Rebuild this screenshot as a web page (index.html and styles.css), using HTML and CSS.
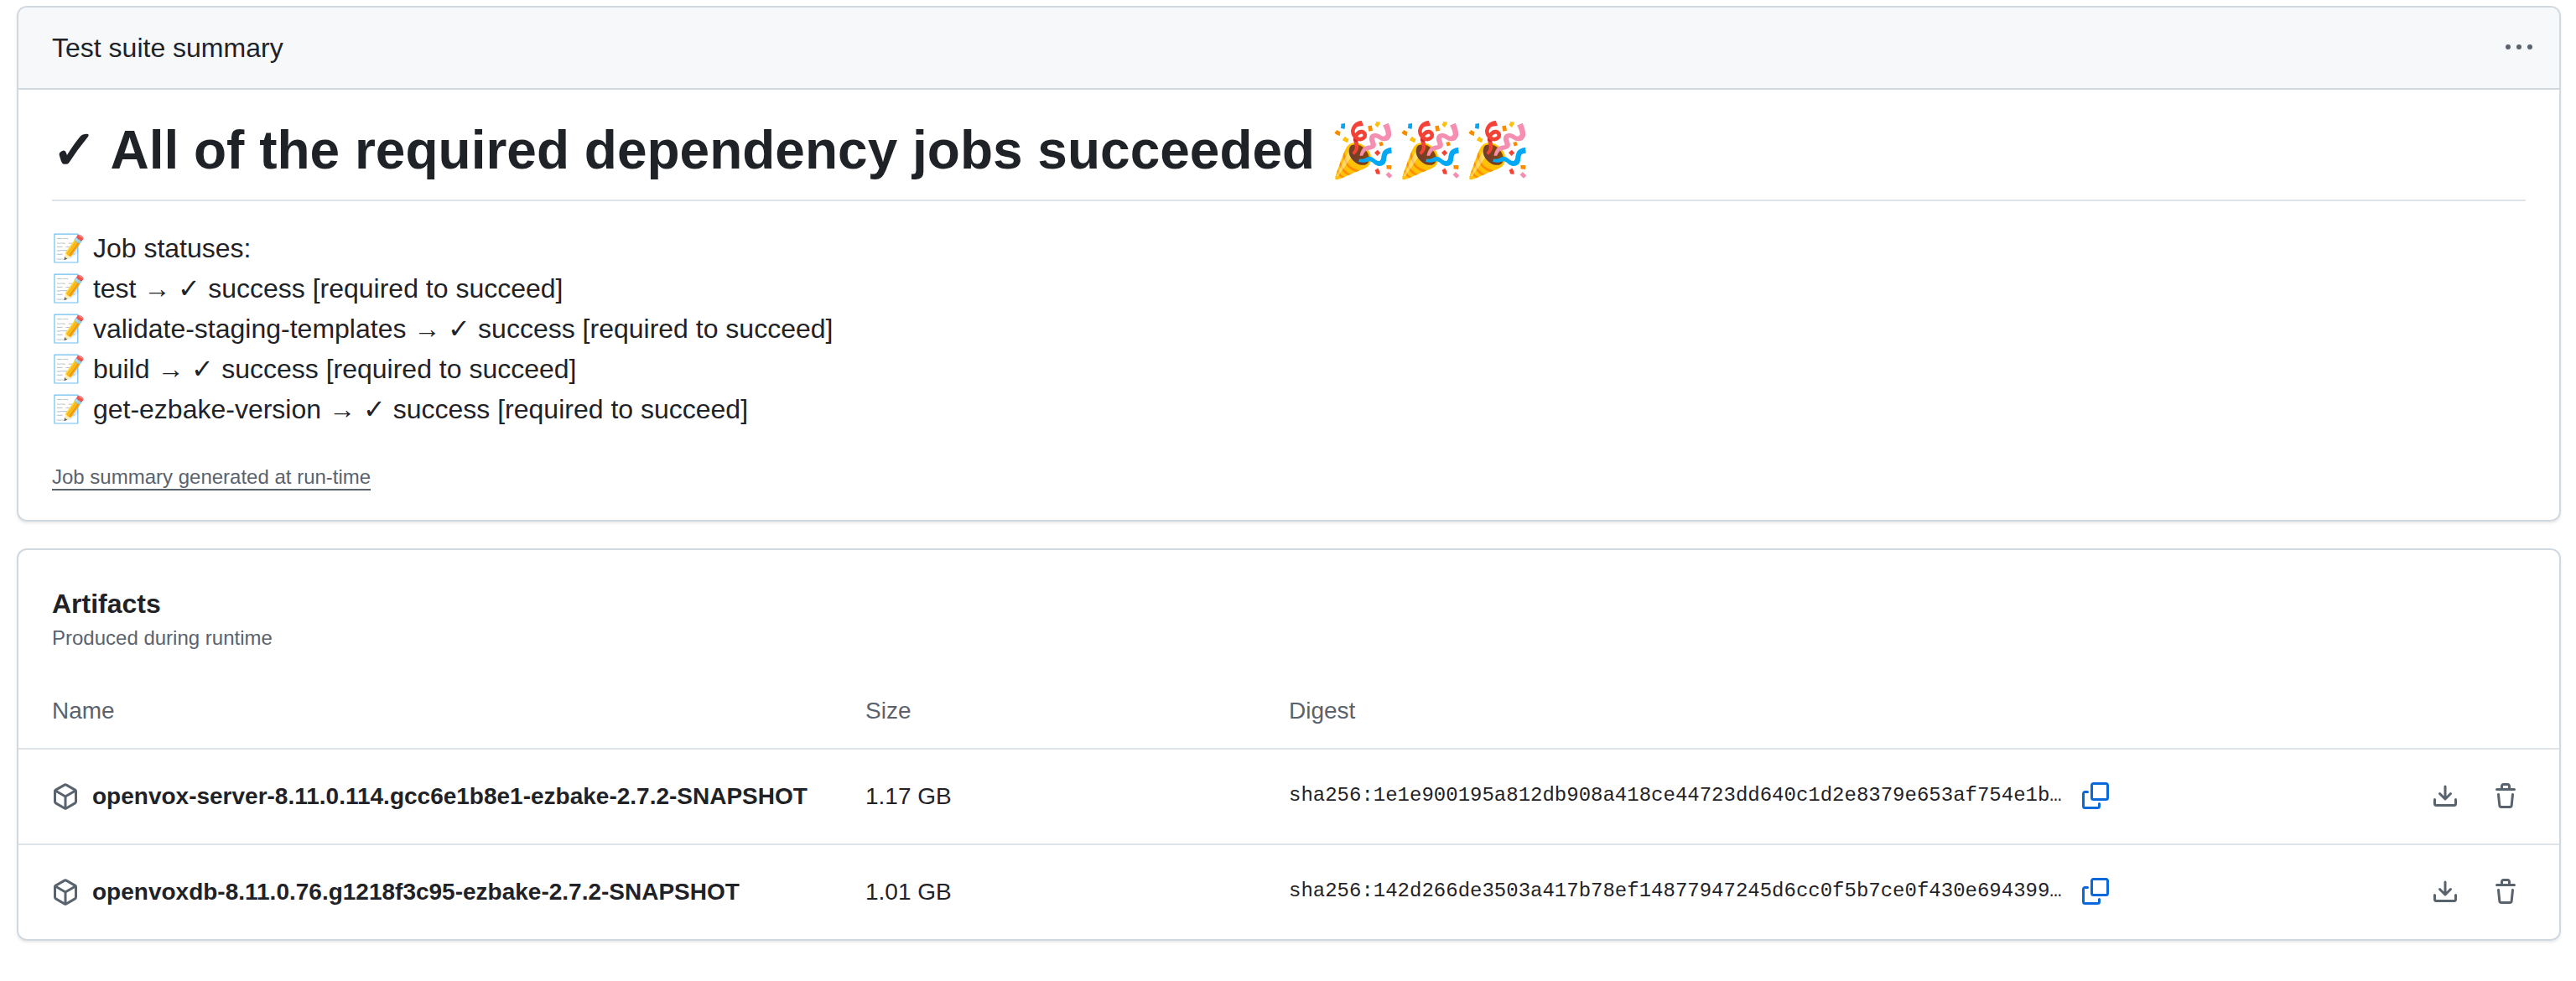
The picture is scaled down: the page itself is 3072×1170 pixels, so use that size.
FILE: index.html
```
<!DOCTYPE html>
<html lang="en">
<head>
    <meta charset="UTF-8">
    <meta name="viewport" content="width=device-width, initial-scale=1.0">
    <title>Test suite summary</title>
    <link rel="stylesheet" href="styles.css">
</head>
<body>
    <!-- Icons -->
    <svg class="sprite" aria-hidden="true">
        <symbol id="package" viewBox="0 0 16 16">
            <path d="m8.878.392 5.25 3.045c.54.314.872.89.872 1.514v6.098a1.75 1.75 0 0 1-.872 1.514l-5.25 3.045a1.75 1.75 0 0 1-1.756 0l-5.25-3.045A1.75 1.75 0 0 1 1 11.049V4.951c0-.624.332-1.201.872-1.514L7.122.392a1.75 1.75 0 0 1 1.756 0ZM7.875 1.69l-4.63 2.685L8 7.133l4.755-2.758-4.63-2.685a.248.248 0 0 0-.25 0ZM2.5 5.677v5.372c0 .09.047.171.125.216l4.625 2.683V8.432Zm6.25 8.271 4.625-2.683a.25.25 0 0 0 .125-.216V5.677L8.75 8.432Z"/>
        </symbol>
        <symbol id="copy" viewBox="0 0 16 16">
            <path d="M0 6.75C0 5.784.784 5 1.75 5h1.5a.75.75 0 0 1 0 1.5h-1.5a.25.25 0 0 0-.25.25v7.5c0 .138.112.25.25.25h7.5a.25.25 0 0 0 .25-.25v-1.5a.75.75 0 0 1 1.5 0v1.5A1.75 1.75 0 0 1 9.25 16h-7.5A1.75 1.75 0 0 1 0 14.25Z"/>
            <path d="M5 1.75C5 .784 5.784 0 6.75 0h7.5C15.216 0 16 .784 16 1.75v7.5A1.75 1.75 0 0 1 14.25 11h-7.5A1.75 1.75 0 0 1 5 9.25Zm1.75-.25a.25.25 0 0 0-.25.25v7.5c0 .138.112.25.25.25h7.5a.25.25 0 0 0 .25-.25v-7.5a.25.25 0 0 0-.25-.25Z"/>
        </symbol>
        <symbol id="download" viewBox="0 0 16 16">
            <path d="M2.75 14A1.75 1.75 0 0 1 1 12.25v-2.5a.75.75 0 0 1 1.5 0v2.5c0 .138.112.25.25.25h10.5a.25.25 0 0 0 .25-.25v-2.5a.75.75 0 0 1 1.5 0v2.5A1.75 1.75 0 0 1 13.25 14Z"/>
            <path d="M7.25 7.689V2a.75.75 0 0 1 1.5 0v5.689l1.97-1.969a.749.749 0 1 1 1.06 1.06l-3.25 3.25a.749.749 0 0 1-1.06 0L4.22 6.78a.749.749 0 1 1 1.06-1.06l1.97 1.969Z"/>
        </symbol>
        <symbol id="trash" viewBox="0 0 16 16">
            <path d="M11 1.75V3h2.25a.75.75 0 0 1 0 1.5H2.75a.75.75 0 0 1 0-1.5H5V1.75C5 .784 5.784 0 6.75 0h2.5C10.216 0 11 .784 11 1.75ZM4.496 6.675l.66 6.6a.25.25 0 0 0 .249.225h5.19a.25.25 0 0 0 .249-.225l.66-6.6a.75.75 0 0 1 1.492.149l-.66 6.6A1.748 1.748 0 0 1 10.595 15h-5.19a1.75 1.75 0 0 1-1.741-1.575l-.66-6.6a.75.75 0 1 1 1.492-.15ZM6.5 1.75V3h3V1.75a.25.25 0 0 0-.25-.25h-2.5a.25.25 0 0 0-.25.25Z"/>
        </symbol>
        <symbol id="kebab" viewBox="0 0 16 16">
            <path d="M8 9a1.5 1.5 0 1 0 0-3 1.5 1.5 0 0 0 0 3ZM1.5 9a1.5 1.5 0 1 0 0-3 1.5 1.5 0 0 0 0 3Zm13 0a1.5 1.5 0 1 0 0-3 1.5 1.5 0 0 0 0 3Z"/>
        </symbol>
    </svg>

    <!-- Job summary -->
    <section class="card">
        <header class="card-header">
            <span>Test suite summary</span>
            <button class="icon-btn" aria-label="More options"><svg class="icon"><use href="#kebab"/></svg></button>
        </header>
        <div class="summary">
            <h1>✓ All of the required dependency jobs succeeded 🎉🎉🎉</h1>
            <p>
                📝 Job statuses:<br>
                📝 test → ✓ success [required to succeed]<br>
                📝 validate-staging-templates → ✓ success [required to succeed]<br>
                📝 build → ✓ success [required to succeed]<br>
                📝 get-ezbake-version → ✓ success [required to succeed]
            </p>
            <a class="summary-note" href="#">Job summary generated at run-time</a>
        </div>
    </section>

    <!-- Artifacts -->
    <section class="card">
        <div class="artifacts-header">
            <h2>Artifacts</h2>
            <div class="subtitle">Produced during runtime</div>
        </div>
        <table class="artifacts">
            <thead>
                <tr>
                    <th class="col-name">Name</th>
                    <th class="col-size">Size</th>
                    <th class="col-digest">Digest</th>
                    <th></th>
                </tr>
            </thead>
            <tbody>
                <tr>
                    <td>
                        <div class="name"><svg class="icon"><use href="#package"/></svg><span>openvox-server-8.11.0.114.gcc6e1b8e1-ezbake-2.7.2-SNAPSHOT</span></div>
                    </td>
                    <td>1.17 GB</td>
                    <td>
                        <div class="digest">
                            <code>sha256:1e1e900195a812db908a418ce44723dd640c1d2e8379e653af754e1b…</code>
                            <button class="icon-btn copy" aria-label="Copy digest"><svg class="icon"><use href="#copy"/></svg></button>
                        </div>
                    </td>
                    <td>
                        <div class="actions">
                            <button class="icon-btn" aria-label="Download"><svg class="icon"><use href="#download"/></svg></button>
                            <button class="icon-btn" aria-label="Delete"><svg class="icon"><use href="#trash"/></svg></button>
                        </div>
                    </td>
                </tr>
                <tr>
                    <td>
                        <div class="name"><svg class="icon"><use href="#package"/></svg><span>openvoxdb-8.11.0.76.g1218f3c95-ezbake-2.7.2-SNAPSHOT</span></div>
                    </td>
                    <td>1.01 GB</td>
                    <td>
                        <div class="digest">
                            <code>sha256:142d266de3503a417b78ef14877947245d6cc0f5b7ce0f430e694399…</code>
                            <button class="icon-btn copy" aria-label="Copy digest"><svg class="icon"><use href="#copy"/></svg></button>
                        </div>
                    </td>
                    <td>
                        <div class="actions">
                            <button class="icon-btn" aria-label="Download"><svg class="icon"><use href="#download"/></svg></button>
                            <button class="icon-btn" aria-label="Delete"><svg class="icon"><use href="#trash"/></svg></button>
                        </div>
                    </td>
                </tr>
            </tbody>
        </table>
    </section>
</body>
</html>
```
FILE: styles.css
```
* {
    box-sizing: border-box;
}
body {
    margin: 0;
    padding: 7px 18px 0 20px;
    font-family: "Liberation Sans", Arial, sans-serif;
    font-size: 28px;
    line-height: 1.5;
    color: #1f2328;
    background-color: #fff;
}
.sprite {
    display: none;
}
.icon {
    display: block;
    width: 32px;
    height: 32px;
    flex-shrink: 0;
    fill: #59636e;
}
.icon-btn {
    padding: 0;
    border: none;
    background: none;
    cursor: pointer;
}
.card {
    margin-bottom: 32px;
    border: 2px solid #d1d9e0;
    border-radius: 12px;
    box-shadow: 0 2px 2px #1f23280a, 0 2px 4px #1f23280f;
    overflow: hidden;
}
.card-header {
    display: flex;
    justify-content: space-between;
    align-items: center;
    height: 98px;
    padding: 0 32px 0 40px;
    font-size: 32px;
    background-color: #f6f8fa;
    border-bottom: 2px solid #d1d9e0;
}
/* Summary */
.summary {
    height: 513px;
    padding: 32px 40px 0;
    font-size: 32px;
}
.summary h1 {
    margin: 0 0 32px;
    padding-bottom: 19px;
    font-size: 64px;
    line-height: 80px;
    border-bottom: 2px solid #d1d9e0b3;
}
.summary p {
    margin: 0 0 38px;
    line-height: 48px;
}
.summary-note {
    display: block;
    width: fit-content;
    height: 35px;
    line-height: 38px;
    font-size: 24px;
    color: #59636e;
    text-decoration: none;
    border-bottom: 2px solid #59636e;
}
/* Artifacts */
.artifacts-header {
    height: 150px;
    padding: 40px 40px 0;
}
.artifacts-header h2 {
    margin: 0;
    font-size: 32px;
    line-height: 48px;
}
.subtitle {
    font-size: 24px;
    line-height: 34px;
    color: #59636e;
}
.artifacts {
    width: 100%;
    table-layout: fixed;
    border-spacing: 0;
}
.artifacts th {
    height: 86px;
    padding: 0 0 2px 40px;
    text-align: left;
    font-weight: normal;
    color: #59636e;
}
.artifacts td {
    height: 114px;
    padding: 0 0 0 40px;
    border-top: 2px solid #d1d9e0b3;
}
.artifacts .col-name {
    width: 970px;
}
.artifacts .col-size {
    width: 505px;
}
.artifacts .col-digest {
    width: 1040px;
}
.name {
    display: flex;
    align-items: center;
    gap: 16px;
    font-weight: bold;
}
.digest {
    display: flex;
    align-items: center;
    gap: 24px;
    padding-bottom: 2px;
}
.digest code {
    font-family: "Liberation Mono", monospace;
    font-size: 24px;
}
.copy .icon {
    fill: #0969da;
}
.actions {
    display: flex;
    justify-content: flex-end;
    gap: 40px;
    padding-right: 48px;
}
```
